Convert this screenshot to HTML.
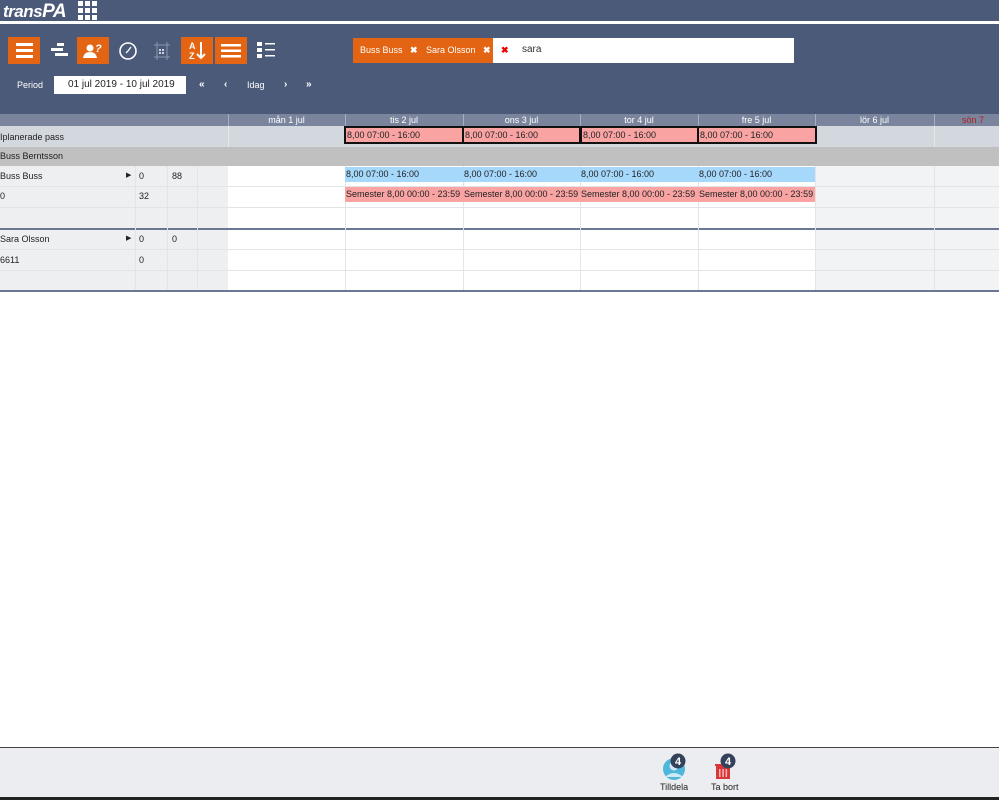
<!DOCTYPE html>
<html><head><meta charset="utf-8"><style>
*{margin:0;padding:0;box-sizing:border-box}
body{width:999px;height:800px;position:relative;background:#fff;font-family:"Liberation Sans",sans-serif;font-size:9px;color:#222;overflow:hidden}
.a{position:absolute}
.ob{position:absolute;top:37px;width:32px;height:27px;background:#e36412}
.t{position:absolute;white-space:nowrap;line-height:1}
.hl{position:absolute;height:1px;background:#e2e4e8}
.vl{position:absolute;width:1px;background:#e2e4e8}
.ev{position:absolute;height:15px;line-height:15px;font-size:9px;padding-left:1px;white-space:nowrap;overflow:hidden}
</style></head><body>
<div class="a" style="left:0;top:0;width:999px;height:114px;background:#4a5a78"></div>
<div class="a" style="left:0;top:21px;width:999px;height:3px;background:#fff"></div>
<div class="t" style="left:3px;top:2px;color:#fff;font-size:17px;font-style:italic;font-weight:bold;letter-spacing:-0.5px">trans<span style="font-size:19px">PA</span></div>
<svg class="a" style="left:78px;top:1px" width="20" height="19"><g fill="#fff"><rect x="0" y="0" width="5" height="5"/><rect x="7" y="0" width="5" height="5"/><rect x="14" y="0" width="5" height="5"/><rect x="0" y="7" width="5" height="5"/><rect x="7" y="7" width="5" height="5"/><rect x="14" y="7" width="5" height="5"/><rect x="0" y="14" width="5" height="5"/><rect x="7" y="14" width="5" height="5"/><rect x="14" y="14" width="5" height="5"/></g></svg>
<!-- toolbar -->
<div class="ob" style="left:8px"><svg width="32" height="27"><g fill="#fff"><rect x="8" y="6" width="17" height="3"/><rect x="8" y="12" width="17" height="3"/><rect x="8" y="18" width="17" height="3"/></g></svg></div>
<svg class="a" style="left:50px;top:42px" width="20" height="18"><g fill="#fff"><rect x="7" y="1" width="7" height="3"/><rect x="1" y="6" width="12" height="3"/><rect x="5" y="11" width="13" height="3"/></g></svg>
<div class="ob" style="left:77px"><svg width="32" height="27"><g fill="#fff"><circle cx="13" cy="11" r="3.5"/><path d="M6 21 q1-6 7-6 q6 0 7 6z"/></g><text x="18" y="15" fill="#fff" font-size="11" font-weight="bold" font-style="italic" font-family="Liberation Sans">?</text></svg></div>
<svg class="a" style="left:118px;top:41px" width="20" height="20"><circle cx="10" cy="10" r="8" fill="none" stroke="#fff" stroke-width="1.6"/><path d="M10 10 L13 6 M10 10 L8 12" stroke="#fff" stroke-width="1.3"/></svg>
<svg class="a" style="left:153px;top:41px" width="18" height="20"><g stroke="#8a96ad" fill="none" stroke-width="1"><path d="M1 4h16M1 16h16M4 1v18M14 1v18"/></g><g fill="#cfd5e0"><rect x="6" y="8" width="2" height="2"/><rect x="9" y="8" width="2" height="2"/><rect x="6" y="11" width="2" height="2"/><rect x="9" y="11" width="2" height="2"/></g></svg>
<div class="ob" style="left:181px"><svg width="32" height="27"><text x="8" y="12" fill="#fff" font-size="9" font-weight="bold" font-family="Liberation Sans">A</text><text x="8" y="22" fill="#fff" font-size="9" font-weight="bold" font-family="Liberation Sans">Z</text><path d="M20 5v16M16 17l4 4 4-4" stroke="#fff" stroke-width="2" fill="none"/></svg></div>
<div class="ob" style="left:215px"><svg width="32" height="27"><g fill="#fff"><rect x="6" y="7" width="20" height="2.5"/><rect x="6" y="12.5" width="20" height="2.5"/><rect x="6" y="18" width="20" height="2.5"/></g></svg></div>
<svg class="a" style="left:256px;top:41px" width="20" height="18"><g fill="#fff"><rect x="1" y="1" width="5" height="4"/><rect x="1" y="7" width="5" height="4"/><rect x="1" y="13" width="5" height="4"/><rect x="9" y="2" width="10" height="1.5"/><rect x="9" y="8" width="10" height="1.5"/><rect x="9" y="14" width="10" height="1.5"/></g></svg>
<!-- search -->
<div class="a" style="left:353px;top:38px;width:140px;height:25px;background:#e36412"></div>
<div class="t" style="left:360px;top:46px;color:#fff;font-size:9px">Buss Buss&nbsp;&nbsp;&nbsp;<b>✖</b></div>
<div class="t" style="left:426px;top:46px;color:#fff;font-size:9px">Sara Olsson&nbsp;&nbsp;&nbsp;<b>✖</b></div>
<div class="a" style="left:493px;top:38px;width:301px;height:25px;background:#fff"></div>
<div class="t" style="left:501px;top:46px;color:#e00;font-size:9px;font-weight:bold">✖</div>
<div class="t" style="left:522px;top:45px;color:#333;font-size:10px">sara</div>
<!-- period -->
<div class="t" style="left:17px;top:81px;color:#fff;font-size:9px">Period</div>
<div class="a" style="left:54px;top:76px;width:132px;height:18px;background:#fff"></div>
<div class="t" style="left:68px;top:80px;color:#222;font-size:10px">01 jul 2019 - 10 jul 2019</div>
<div class="t" style="left:199px;top:80px;color:#fff;font-size:10px;font-weight:bold">«</div>
<div class="t" style="left:224px;top:80px;color:#fff;font-size:10px;font-weight:bold">‹</div>
<div class="t" style="left:247px;top:81px;color:#fff;font-size:9px">Idag</div>
<div class="t" style="left:284px;top:80px;color:#fff;font-size:10px;font-weight:bold">›</div>
<div class="t" style="left:306px;top:80px;color:#fff;font-size:10px;font-weight:bold">»</div>
<!-- header -->
<div class="a" style="left:0;top:114px;width:999px;height:12px;background:#7a859d"></div>
<div class="a" style="left:228px;top:114px;width:1px;height:12px;background:#a6aec0"></div>
<div class="a" style="left:345px;top:114px;width:1px;height:12px;background:#a6aec0"></div>
<div class="a" style="left:463px;top:114px;width:1px;height:12px;background:#a6aec0"></div>
<div class="a" style="left:580px;top:114px;width:1px;height:12px;background:#a6aec0"></div>
<div class="a" style="left:698px;top:114px;width:1px;height:12px;background:#a6aec0"></div>
<div class="a" style="left:815px;top:114px;width:1px;height:12px;background:#a6aec0"></div>
<div class="a" style="left:934px;top:114px;width:1px;height:12px;background:#a6aec0"></div>
<div class="t" style="left:228px;width:117px;text-align:center;top:116px;color:#fff">mån 1 jul</div>
<div class="t" style="left:345px;width:118px;text-align:center;top:116px;color:#fff">tis 2 jul</div>
<div class="t" style="left:463px;width:117px;text-align:center;top:116px;color:#fff">ons 3 jul</div>
<div class="t" style="left:580px;width:118px;text-align:center;top:116px;color:#fff">tor 4 jul</div>
<div class="t" style="left:698px;width:117px;text-align:center;top:116px;color:#fff">fre 5 jul</div>
<div class="t" style="left:815px;width:119px;text-align:center;top:116px;color:#fff">lör 6 jul</div>
<div class="t" style="left:962px;top:116px;color:#b02020">sön 7</div>
<!-- unplanned row -->
<div class="a" style="left:0;top:126px;width:999px;height:21px;background:#d3d7de"></div>
<div class="t" style="left:0;top:133px">Iplanerade pass</div>
<div class="a" style="left:228px;top:126px;width:1px;height:21px;background:#e6e8ec"></div>
<div class="a" style="left:934px;top:126px;width:1px;height:21px;background:#e6e8ec"></div>
<div class="ev" style="left:344px;top:126px;width:120px;height:18px;line-height:14px;background:#f9a3a3;border:2px solid #111">8,00 07:00 - 16:00</div>
<div class="ev" style="left:462px;top:126px;width:119px;height:18px;line-height:14px;background:#f9a3a3;border:2px solid #111">8,00 07:00 - 16:00</div>
<div class="ev" style="left:580px;top:126px;width:119px;height:18px;line-height:14px;background:#f9a3a3;border:2px solid #111">8,00 07:00 - 16:00</div>
<div class="ev" style="left:697px;top:126px;width:120px;height:18px;line-height:14px;background:#f9a3a3;border:2px solid #111">8,00 07:00 - 16:00</div>
<!-- group row -->
<div class="a" style="left:0;top:147px;width:999px;height:19px;background:#c0c0c0"></div>
<div class="t" style="left:0;top:152px">Buss Berntsson</div>
<!-- body rows -->
<div class="a" style="left:0;top:166px;width:228px;height:124px;background:#eeeff1"></div>
<div class="a" style="left:815px;top:166px;width:184px;height:124px;background:#f2f3f5"></div>
<div class="hl" style="left:0;top:186px;width:999px"></div>
<div class="hl" style="left:0;top:207px;width:999px"></div>
<div class="hl" style="left:0;top:249px;width:999px"></div>
<div class="hl" style="left:0;top:270px;width:999px"></div>
<div class="a" style="left:0;top:228px;width:999px;height:2px;background:#6b7795"></div>
<div class="a" style="left:0;top:290px;width:999px;height:2px;background:#6b7795"></div>
<div class="vl" style="left:135px;top:166px;height:124px"></div>
<div class="vl" style="left:167px;top:166px;height:124px"></div>
<div class="vl" style="left:197px;top:166px;height:124px"></div>
<div class="vl" style="left:345px;top:166px;height:124px"></div>
<div class="vl" style="left:463px;top:166px;height:124px"></div>
<div class="vl" style="left:580px;top:166px;height:124px"></div>
<div class="vl" style="left:698px;top:166px;height:124px"></div>
<div class="vl" style="left:815px;top:166px;height:124px"></div>
<div class="vl" style="left:934px;top:166px;height:124px"></div>
<div class="t" style="left:0;top:172px">Buss Buss</div>
<div class="t" style="left:126px;top:172px;font-size:7px">▶</div>
<div class="t" style="left:139px;top:172px">0</div>
<div class="t" style="left:172px;top:172px">88</div>
<div class="t" style="left:0;top:192px">0</div>
<div class="t" style="left:139px;top:192px">32</div>
<div class="t" style="left:0;top:235px">Sara Olsson</div>
<div class="t" style="left:126px;top:235px;font-size:7px">▶</div>
<div class="t" style="left:139px;top:235px">0</div>
<div class="t" style="left:172px;top:235px">0</div>
<div class="t" style="left:0;top:256px">6611</div>
<div class="t" style="left:139px;top:256px">0</div>
<div class="ev" style="left:345px;top:167px;width:118px;background:#a6d8fc">8,00 07:00 - 16:00</div>
<div class="ev" style="left:463px;top:167px;width:117px;background:#a6d8fc">8,00 07:00 - 16:00</div>
<div class="ev" style="left:580px;top:167px;width:118px;background:#a6d8fc">8,00 07:00 - 16:00</div>
<div class="ev" style="left:698px;top:167px;width:117px;background:#a6d8fc">8,00 07:00 - 16:00</div>
<div class="ev" style="left:345px;top:187px;width:118px;background:#f9a3a3">Semester 8,00 00:00 - 23:59</div>
<div class="ev" style="left:463px;top:187px;width:117px;background:#f9a3a3">Semester 8,00 00:00 - 23:59</div>
<div class="ev" style="left:580px;top:187px;width:118px;background:#f9a3a3">Semester 8,00 00:00 - 23:59</div>
<div class="ev" style="left:698px;top:187px;width:117px;background:#f9a3a3">Semester 8,00 00:00 - 23:59</div>
<!-- footer -->
<div class="a" style="left:0;top:747px;width:999px;height:1px;background:#444"></div>
<div class="a" style="left:0;top:748px;width:999px;height:49px;background:#ecedf0"></div>
<div class="a" style="left:0;top:797px;width:999px;height:3px;background:#222"></div>
<svg class="a" style="left:660px;top:753px" width="30" height="28"><circle cx="14" cy="16" r="11" fill="#4fb6dc"/><circle cx="14" cy="13" r="4.5" fill="#cfeaf5"/><path d="M5 24 q9-8 18 0z" fill="#cfeaf5"/><circle cx="18" cy="8" r="7.5" fill="#34415a"/><text x="18" y="12" fill="#fff" font-size="11" font-weight="bold" text-anchor="middle" font-family="Liberation Sans">4</text></svg>
<div class="t" style="left:660px;top:783px">Tilldela</div>
<svg class="a" style="left:712px;top:753px" width="30" height="28"><rect x="4" y="13" width="14" height="13" fill="#d9363a"/><rect x="3" y="11" width="16" height="2" fill="#d9363a"/><g fill="#f5b5b5"><rect x="7" y="16" width="1.5" height="8"/><rect x="10.3" y="16" width="1.5" height="8"/><rect x="13.6" y="16" width="1.5" height="8"/></g><circle cx="16" cy="8" r="7.5" fill="#34415a"/><text x="16" y="12" fill="#fff" font-size="11" font-weight="bold" text-anchor="middle" font-family="Liberation Sans">4</text></svg>
<div class="t" style="left:711px;top:783px">Ta bort</div>
</body></html>
